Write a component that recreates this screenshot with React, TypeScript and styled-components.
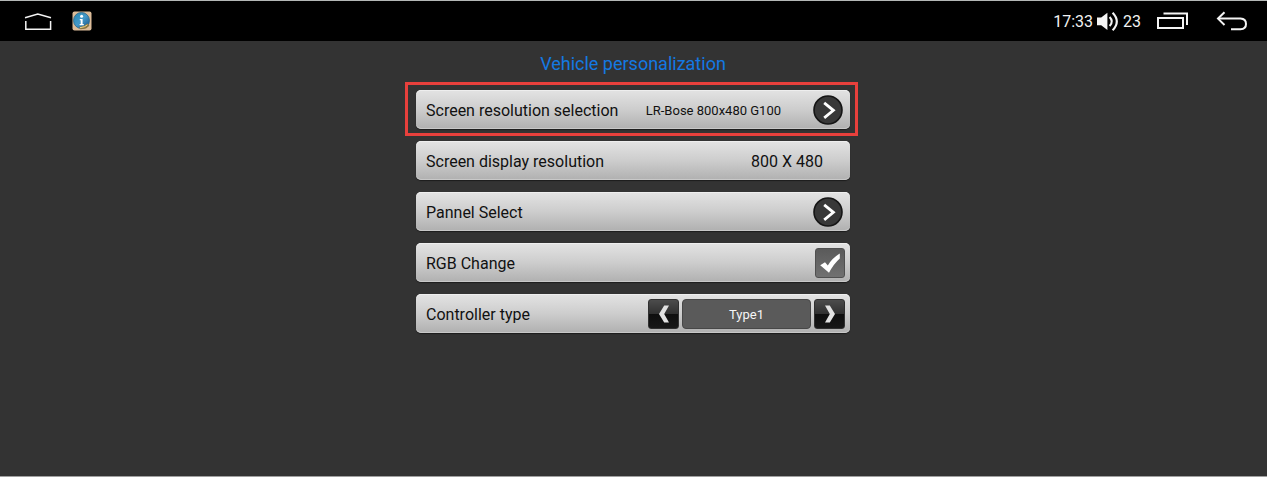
import React, { useState } from "react";
import styled, { createGlobalStyle, css } from "styled-components";

const GlobalStyle = createGlobalStyle`
  *, *::before, *::after { box-sizing: border-box; }
  body {
    margin: 0;
    background: #333333;
    font-family: Roboto, "Liberation Sans", sans-serif;
  }
  button, input { font: inherit; color: inherit; }
`;

const Screen = styled.div`
  display: flex;
  flex-direction: column;
  min-height: 100vh;
  background: #333333;
  border-top: 1px solid #b4b8b6;
  border-bottom: 1px solid #a0a0a0;
`;

const StatusBar = styled.header`
  display: flex;
  align-items: center;
  justify-content: space-between;
  height: 40px;
  padding: 0 19px 0 24px;
  background: #000000;
  color: #f2f2f2;
`;

const BarGroup = styled.div<{ $gap: number }>`
  display: flex;
  align-items: center;
  gap: ${(p) => p.$gap}px;
`;

const BarButton = styled.button`
  display: block;
  padding: 0;
  border: 0;
  background: none;
  cursor: pointer;

  svg { display: block; }
`;

const Status = styled.div`
  display: flex;
  align-items: center;
  gap: 4px;
  font-size: 16px;
  line-height: 20px;
  padding-top: 1px;

  svg { display: block; }
`;

const Main = styled.main`
  display: flex;
  flex-direction: column;
  align-items: center;
  padding: 11px 17px 24px 16px;
`;

const Title = styled.h1`
  margin: 0 0 14px;
  font-size: 18px;
  line-height: 24px;
  font-weight: 400;
  color: #1479e2;
`;

const Settings = styled.div`
  display: flex;
  flex-direction: column;
  gap: 12px;
  width: 100%;
  max-width: 434px;
`;

const rowLook = css`
  display: flex;
  align-items: center;
  width: 100%;
  height: 39px;
  padding: 0 7px 0 10px;
  border: 0;
  border-radius: 5px;
  background: linear-gradient(#e3e3e3, #cdcdcd 50%, #b0b0b0);
  box-shadow: inset 0 1px 0 #eeeeee, inset 0 -1px 0 #c8c8c8, 0 1px 1px #1c1c1c;
  color: #111111;
  font-size: 16px;
  line-height: 20px;
  text-align: left;
`;

const Row = styled.div`
  ${rowLook}
`;

const CheckRow = styled.label`
  ${rowLook}
  cursor: pointer;
`;

const RowButton = styled.button<{ $marked?: boolean }>`
  &&& {
    ${rowLook}
    cursor: pointer;
  }

  ${(p) =>
    p.$marked &&
    css`
      position: relative;

      &::after {
        content: "";
        position: absolute;
        inset: -8px -8px -7px -11px;
        border: 3px solid #e8403c;
        pointer-events: none;
      }
    `}
`;

const Label = styled.span`
  flex: 1;
  padding-top: 3px;
`;

const Detail = styled.span`
  padding: 3px 32px 0 0;
  font-size: 13px;
`;

const Value = styled.span`
  padding: 3px 20px 0 0;
`;

const Round = styled.span`
  display: block;
  height: 30px;

  svg { display: block; }
`;

const CheckBox = styled.span`
  display: grid;
  width: 30px;
  height: 30px;
  margin-right: -2px;

  > * { grid-area: 1 / 1; }
  svg { pointer-events: none; visibility: hidden; }
  input:checked + svg { visibility: visible; }
`;

const CheckInput = styled.input`
  appearance: none;
  width: 30px;
  height: 30px;
  margin: 0;
  border: 1px solid #505050;
  border-radius: 3px;
  background: linear-gradient(#5a5a5a, #717171);
  cursor: pointer;
`;

const Stepper = styled.div`
  display: flex;
  align-items: center;
  gap: 3px;
  margin-right: -2px;
`;

const StepButton = styled.button`
  width: 31px;
  height: 30px;
  padding: 0;
  border: 1px solid #303030;
  border-radius: 3px;
  background: linear-gradient(#4c4c4c, #303030 50%, #0e0e0e 51%, #171717);
  cursor: pointer;

  svg { display: block; margin: 0 auto; }
`;

const StepValue = styled.output`
  width: 129px;
  height: 30px;
  border: 1px solid #474747;
  border-radius: 4px;
  background: #5a5a5a;
  color: #f5f5f5;
  font-size: 13px;
  line-height: 30px;
  text-align: center;
`;

const HomeIcon = () => (
  <svg width="28" height="20" viewBox="0 0 28 20" fill="none" stroke="#f4f4f4" strokeWidth="1.5">
    <path d="M1 6.7 L13.8 3 L27 6.7" />
    <path d="M1.8 10 V18.2 H26.6 V10" />
  </svg>
);

const InfoIcon = () => (
  <svg width="20" height="20" viewBox="0 0 20 20">
    <defs>
      <linearGradient id="globe" x1="0" y1="0" x2="1" y2="1">
        <stop offset="0" stopColor="#2787b0" />
        <stop offset=".5" stopColor="#4398c8" />
        <stop offset="1" stopColor="#114c83" />
      </linearGradient>
    </defs>
    <rect x=".5" y=".5" width="19" height="19" rx="2" fill="#dcbc99" />
    <circle cx="9.5" cy="9.5" r="8" fill="url(#globe)" stroke="#2b668a" strokeWidth=".8" />
    <circle cx="9.6" cy="5.2" r="1.5" fill="#ffffff" />
    <path d="M7.8 8 H10.6 V13 H11.8 V14.3 H7.6 V13 H8.7 V9.2 H7.8Z" fill="#ffffff" />
    <path d="M7 16.2 L12 14.8 L15.5 12.5 L17.4 14.8 L14 17.6 L8.5 18.2Z" fill="#8a7440" />
    <path d="M8 16.7 L12.5 15.7 L15.4 13.8" fill="none" stroke="#ead58d" strokeWidth="1" />
  </svg>
);

const SpeakerIcon = () => (
  <svg width="22" height="20" viewBox="0 0 22 20">
    <path d="M0 5.6 H4.2 L10.4 .8 V18 L4.2 13.2 H0Z" fill="#f4f4f4" />
    <path d="M12.6 5 Q17 9.5 12.6 14" fill="none" stroke="#f4f4f4" strokeWidth="2.1" />
    <path d="M15.6 .7 Q24 9.5 15.6 18.3" fill="none" stroke="#f4f4f4" strokeWidth="2.1" />
  </svg>
);

const RecentIcon = () => (
  <svg width="32" height="18" viewBox="0 0 32 18" fill="none" stroke="#f4f4f4" strokeWidth="2">
    <rect x="1" y="6" width="25" height="10" />
    <path d="M6.5 1.6 H30 V13" />
  </svg>
);

const BackIcon = () => (
  <svg width="32" height="20" viewBox="0 0 32 20" fill="none" stroke="#f4f4f4" strokeWidth="2">
    <path d="M8.5 1.2 L2 7.6 L8.5 14" />
    <path d="M2 7.6 H24.5 Q30 8 30 13 Q30 18 24.5 18.2 H15" />
  </svg>
);

const ArrowIcon = () => (
  <Round>
    <svg width="30" height="30" viewBox="0 0 30 30" fill="none">
      <circle cx="15" cy="15" r="14" fill="#383838" stroke="#151515" strokeWidth="1.6" />
      <path d="M11.2 7.8 L20.4 15.3 L11.2 22.8" stroke="#ffffff" strokeWidth="2.8" />
    </svg>
  </Round>
);

const TickIcon = () => (
  <svg width="30" height="30" viewBox="0 0 30 30">
    <path d="M5.2 17.2 L10 14.2 L12.8 17.4 Q17.6 9.6 24.8 5.6 V10.4 Q18.6 15.8 14 24.8Z" fill="#ffffff" />
  </svg>
);

const StepIcon = ({ next }: { next?: boolean }) => (
  <svg width="14" height="20" viewBox="0 0 14 20">
    <path
      d={next ? "M2 1.5 H6.8 L12 10 L6.8 18.5 H2 L6.8 10Z" : "M12 1.5 H7.2 L2 10 L7.2 18.5 H12 L7.2 10Z"}
      fill="#e2e2e2"
    />
  </svg>
);

const TYPES = ["Type1", "Type2", "Type3"];

export default function App() {
  const [rgb, setRgb] = useState(true);
  const [type, setType] = useState(0);
  const step = (by: number) => setType((type + by + TYPES.length) % TYPES.length);

  return (
    <>
      <GlobalStyle />
      <Screen>
        <StatusBar>
          <BarGroup $gap={20}>
            <BarButton aria-label="Home"><HomeIcon /></BarButton>
            <BarButton aria-label="Information"><InfoIcon /></BarButton>
          </BarGroup>
          <BarGroup $gap={16}>
            <Status>
              <span>17:33</span>
              <SpeakerIcon />
              <span>23</span>
            </Status>
            <BarGroup $gap={27}>
              <BarButton aria-label="Recent apps"><RecentIcon /></BarButton>
              <BarButton aria-label="Back"><BackIcon /></BarButton>
            </BarGroup>
          </BarGroup>
        </StatusBar>
        <Main>
          <Title>Vehicle personalization</Title>
          <Settings>
            <RowButton $marked>
              <Label>Screen resolution selection</Label>
              <Detail>LR-Bose 800x480 G100</Detail>
              <ArrowIcon />
            </RowButton>
            <Row>
              <Label>Screen display resolution</Label>
              <Value>800 X 480</Value>
            </Row>
            <RowButton>
              <Label>Pannel Select</Label>
              <ArrowIcon />
            </RowButton>
            <CheckRow>
              <Label>RGB Change</Label>
              <CheckBox>
                <CheckInput type="checkbox" checked={rgb} onChange={(e) => setRgb(e.target.checked)} />
                <TickIcon />
              </CheckBox>
            </CheckRow>
            <Row>
              <Label id="controller-type">Controller type</Label>
              <Stepper role="group" aria-labelledby="controller-type">
                <StepButton aria-label="Previous type" onClick={() => step(-1)}><StepIcon /></StepButton>
                <StepValue>{TYPES[type]}</StepValue>
                <StepButton aria-label="Next type" onClick={() => step(1)}><StepIcon next /></StepButton>
              </Stepper>
            </Row>
          </Settings>
        </Main>
      </Screen>
    </>
  );
}
